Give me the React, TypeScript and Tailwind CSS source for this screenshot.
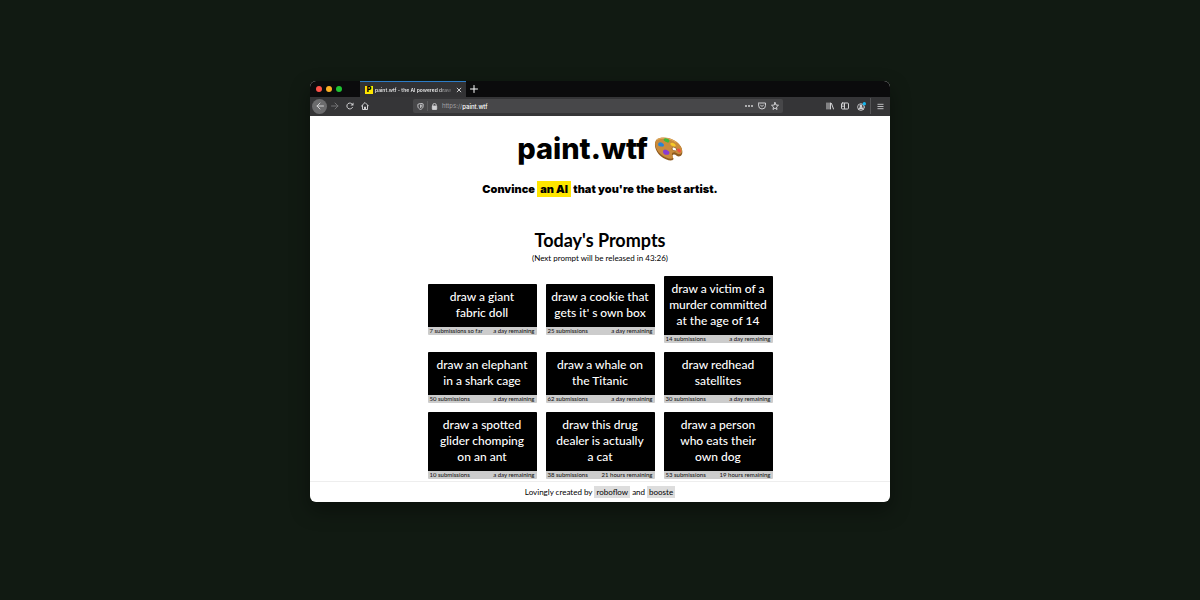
import type { ReactNode } from "react";

type Prompt = { lines: string[]; count: string; remaining: string };

const prompts: Prompt[] = [
  { lines: ["draw a giant", "fabric doll"], count: "7 submissions so far", remaining: "a day remaining" },
  { lines: ["draw a cookie that", "gets it' s own box"], count: "25 submissions", remaining: "a day remaining" },
  { lines: ["draw a victim of a", "murder committed", "at the age of 14"], count: "14 submissions", remaining: "a day remaining" },
  { lines: ["draw an elephant", "in a shark cage"], count: "50 submissions", remaining: "a day remaining" },
  { lines: ["draw a whale on", "the Titanic"], count: "62 submissions", remaining: "a day remaining" },
  { lines: ["draw redhead", "satellites"], count: "30 submissions", remaining: "a day remaining" },
  { lines: ["draw a spotted", "glider chomping", "on an ant"], count: "10 submissions", remaining: "a day remaining" },
  { lines: ["draw this drug", "dealer is actually", "a cat"], count: "38 submissions", remaining: "21 hours remaining" },
  { lines: ["draw a person", "who eats their", "own dog"], count: "53 submissions", remaining: "19 hours remaining" },
];

function Icon({ children, className = "size-2" }: { children: ReactNode; className?: string }) {
  return (
    <svg viewBox="0 0 16 16" aria-hidden="true" fill="none" stroke="currentColor" strokeWidth="2" strokeLinecap="round" strokeLinejoin="round" className={`shrink-0 ${className}`}>
      {children}
    </svg>
  );
}

function ToolButton({ label, children, className = "" }: { label: string; children: ReactNode; className?: string }) {
  return (
    <button type="button" aria-label={label} className={`flex shrink-0 items-center justify-center ${className}`}>
      {children}
    </button>
  );
}

function Palette() {
  return (
    <svg viewBox="0 0 60 50" aria-hidden="true" className="h-6 w-[29px]">
      <path d="M5 7C14-1 34 1 47 11c9 7 14 17 11 25-2 5-8 6-11 3-4-4-9-3-9 1 0 3 4 4 2 7-3 4-17 1-26-7C3 31-2 14 5 7Z" fill="#8f5b20" />
      <path d="M5 5C14-2 34 0 47 10c9 7 13 16 11 22-2 5-7 5-11 2-5-4-10-2-10 2 0 3 4 5 2 8-3 4-16 0-25-8C3 28-1 12 5 5Z" fill="#c98b3c" />
      <path d="M6 6C15 0 33 2 46 11" fill="none" stroke="#e2ad61" strokeWidth="2" />
      <ellipse cx="42" cy="25" rx="5" ry="3.5" transform="rotate(25 42 25)" fill="#fff" stroke="#8f5b20" strokeWidth="1.5" />
      <path d="M20 4c4-3 11 0 12 4 0 3-3 5-5 3-4-2-8-3-7-7Z" fill="#40b83a" />
      <path d="M9 13c3-4 8-1 11 2 2 3-1 6-5 5-5 0-8-3-6-7Z" fill="#2884d5" />
      <path d="M19 28c3-4 8-1 12 2 3 4-1 8-5 7-5 1-9-5-7-9Z" fill="#8a3bd0" />
      <path d="M34 13c4-3 9 0 11 4 1 3-3 4-6 2-3-1-6-3-5-6Z" fill="#f5c928" />
      <path d="M48 25c2-3 7 0 8 4 0 3-3 4-5 2-2-1-4-3-3-6Z" fill="#ef5142" />
    </svg>
  );
}

function BrowserChrome() {
  return (
    <header className="text-[#d0d0d2]">
      <div className="flex h-4 items-stretch bg-[#0b0b0c]">
        <div className="flex w-[50px] shrink-0 items-center gap-1 pl-1.5">
          <span className="size-1.5 rounded-full bg-[#ff5148]" />
          <span className="size-1.5 rounded-full bg-[#fdaf24]" />
          <span className="size-1.5 rounded-full bg-[#1fc231]" />
        </div>
        <div className="flex w-[106px] shrink-0 items-center border-t border-[#2d7cc8] bg-[#323234] pr-1 pl-[5px]">
          <span className="flex size-2 shrink-0 items-center justify-center bg-[#ffe600] font-['Inter'] text-[7px] leading-none font-black text-black">P</span>
          <span className="ml-0.5 min-w-0 flex-1 bg-linear-to-r from-[#f3f3f3] from-80% to-[#5a5a5c] bg-clip-text font-['Inter'] text-[5px] leading-2 font-semibold whitespace-nowrap text-transparent">
            paint.wtf - the AI powered draw
          </span>
          <ToolButton label="Close tab" className="ml-1 text-white">
            <Icon className="size-1.5"><path d="m3 3 10 10M13 3 3 13" /></Icon>
          </ToolButton>
        </div>
        <ToolButton label="New tab" className="ml-1 text-white">
          <Icon><path d="M8 1v14M1 8h14" /></Icon>
        </ToolButton>
      </div>
      <div className="flex h-[19px] items-center bg-[#353537] pr-1.5 pb-px">
        <ToolButton label="Back" className="ml-0.5 size-[15px] rounded-full bg-[#6b6b6d]">
          <Icon><path d="M15 8H2m6-6L2 8l6 6" /></Icon>
        </ToolButton>
        <ToolButton label="Forward" className="ml-1 text-[#727274]">
          <Icon><path d="M1 8h13M8 2l6 6-6 6" /></Icon>
        </ToolButton>
        <ToolButton label="Reload" className="ml-[7px]">
          <Icon><path d="M13 11a6 6 0 1 1 0-6" /><path d="M15 1v6H9Z" fill="currentColor" stroke="none" /></Icon>
        </ToolButton>
        <ToolButton label="Home" className="ml-[7px]">
          <Icon><path d="m1 8 7-7 7 7M3 7v8h10V7M7 15v-5h2v5" /></Icon>
        </ToolButton>
        <div className="ml-11 flex h-[14px] w-[370px] min-w-0 items-center rounded-xs bg-[#474749] px-1">
          <Icon className="size-[7px]"><path d="M8 1 2 3v4c0 4 2 6 6 8 4-2 6-4 6-8V3Z" /><path d="M8 5v6c2-1 3-2 3-5Z" /></Icon>
          <span className="ml-[3px] h-2.5 w-px shrink-0 bg-[#5d5d5f]" />
          <Icon className="ml-[3px] size-[7px]"><path d="M4 7V5a4 4 0 0 1 8 0v2" /><rect x="3" y="7" width="10" height="8" rx="1" fill="currentColor" /></Icon>
          <label htmlFor="address" className="ml-1 font-['Inter'] text-[6px] leading-none text-[#a0a0a2]">https://</label>
          <input id="address" type="text" defaultValue="paint.wtf" className="w-0 min-w-0 flex-1 bg-transparent font-['Inter'] text-[6px] leading-none font-medium text-white outline-none" />
          <ToolButton label="Page actions" className="ml-1">
            <Icon><g fill="currentColor" stroke="none"><circle cx="2" cy="8" r="2" /><circle cx="8" cy="8" r="2" /><circle cx="14" cy="8" r="2" /></g></Icon>
          </ToolButton>
          <ToolButton label="Save to Pocket" className="ml-[5px]">
            <Icon><path d="M1 2h14v5a7 7 0 0 1-14 0Z M5 6l3 3 3-3" /></Icon>
          </ToolButton>
          <ToolButton label="Bookmark" className="ml-[5px]">
            <Icon><path d="m8 1 2 5 5 .5-4 3.5 1 5-4-3-4 3 1-5-4-3.500 5-.5Z" /></Icon>
          </ToolButton>
        </div>
        <ToolButton label="Library" className="ml-auto">
          <Icon><path d="M2 2v12M6 2v12M9 2v12M11 3l4 11" /></Icon>
        </ToolButton>
        <ToolButton label="Sidebar" className="ml-[7px]">
          <Icon><rect x="1" y="2" width="14" height="12" rx="2" /><path d="M7 3v10M3.500 6h1M3.500 9h1" /></Icon>
        </ToolButton>
        <ToolButton label="Account" className="ml-2">
          <Icon className="size-[9px]">
            <circle cx="7" cy="9" r="6" strokeWidth="1.500" />
            <circle cx="7" cy="7" r="2.500" fill="currentColor" stroke="none" />
            <path d="M3 13c1-4 7-4 8 0" fill="currentColor" />
            <circle cx="13" cy="3" r="3" fill="#16b6ef" stroke="none" />
          </Icon>
        </ToolButton>
        <span className="ml-1 h-4 w-px shrink-0 bg-[#555557]" />
        <ToolButton label="Menu" className="ml-1.5">
          <Icon className="size-[7px]"><path d="M2 3h12M2 8h12M2 13h12" /></Icon>
        </ToolButton>
      </div>
    </header>
  );
}

function PromptCard({ lines, count, remaining }: Prompt) {
  return (
    <a href="#draw" className="block overflow-hidden rounded-[1px] bg-[#cccccc]">
      <span className="block bg-black pt-[5px] pb-1.5 text-center text-[12px] leading-4 font-medium text-white">
        {lines.map((line) => (
          <span key={line} className="block whitespace-nowrap">{line}</span>
        ))}
      </span>
      <span className="flex justify-between px-0.5 text-[6px] leading-2 font-medium whitespace-nowrap text-[#181818]">
        <span>{count}</span>
        <span>{remaining}</span>
      </span>
    </a>
  );
}

export default function App() {
  return (
    <div className="flex min-h-screen flex-col items-center bg-[#111a12] pt-[81px] font-['Lato','Noto_Sans',sans-serif] text-black">
      <div className="w-full max-w-[580px] overflow-hidden rounded-md bg-white shadow-[0_8px_20px_rgba(0,0,0,0.4)]">
        <BrowserChrome />
        <main className="flex flex-col items-center pt-[17px] pb-0.5">
          <h1 className="flex items-center gap-1.5 font-['Inter'] text-[29px] leading-8 font-extrabold [font-variant-ligatures:none]">
            paint.wtf <Palette />
          </h1>
          <p className="mt-4 font-['Inter'] text-[11px] leading-4 font-black">
            Convince <mark className="inline-block bg-[#ffe600] px-[3px] text-black">an AI</mark> that you're the best artist.
          </p>
          <h2 className="mt-[31px] text-[18px] leading-6 font-bold">Today's Prompts</h2>
          <p className="text-[8px] leading-3">(Next prompt will be released in 43:26)</p>
          <div className="mt-3 grid w-full max-w-[345px] grid-cols-3 items-center gap-[9px]">
            {prompts.map((prompt) => (
              <PromptCard key={prompt.lines[0]} {...prompt} />
            ))}
          </div>
        </main>
        <footer className="flex items-center justify-center gap-0.5 border-t border-[#eeeeee] py-1 text-[8px] leading-3">
          <span>Lovingly created by</span>
          <a href="#roboflow" className="bg-[#dddddd] px-0.5">roboflow</a>
          <span>and</span>
          <a href="#booste" className="bg-[#dddddd] px-0.5">booste</a>
        </footer>
      </div>
    </div>
  );
}
